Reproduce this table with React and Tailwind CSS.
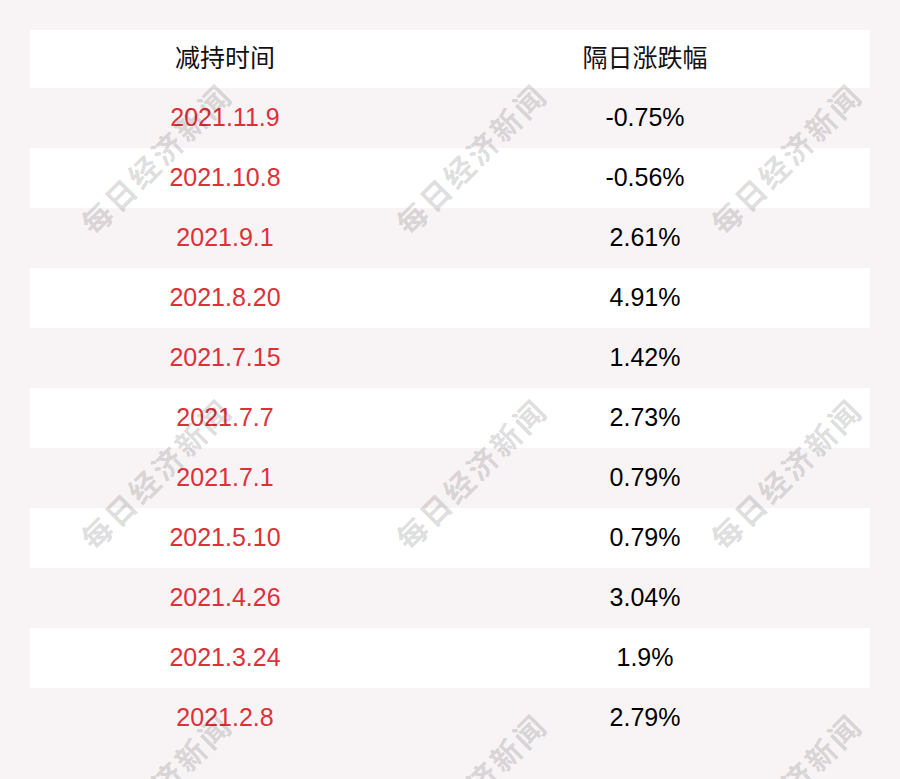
const rows = [
  ["2021.11.9", "-0.75%"],
  ["2021.10.8", "-0.56%"],
  ["2021.9.1", "2.61%"],
  ["2021.8.20", "4.91%"],
  ["2021.7.15", "1.42%"],
  ["2021.7.7", "2.73%"],
  ["2021.7.1", "0.79%"],
  ["2021.5.10", "0.79%"],
  ["2021.4.26", "3.04%"],
  ["2021.3.24", "1.9%"],
  ["2021.2.8", "2.79%"],
];

// watermark centres, 315px apart
const marks = [];
for (const y of [158, 473, 788]) {
  for (const x of [156, 471, 786]) marks.push([x, y]);
}

function App() {
  return (
    <div
      className="relative h-[779px] w-[900px] overflow-hidden bg-[#f8f4f5] px-[30px] pt-[30px] text-[25px]"
      style={{ fontFamily: '"Liberation Sans", Arial, "Noto Sans CJK SC", sans-serif' }}
    >
      <div className="grid h-[58px] grid-cols-2 items-center bg-white text-[#111]">
        <div className="pr-[30px] text-center">减持时间</div>
        <div className="pr-[30px] text-center">隔日涨跌幅</div>
      </div>
      {rows.map(([date, pct], i) => (
        <div
          key={date}
          className={`grid h-[60px] grid-cols-2 items-center ${i % 2 === 1 ? "bg-white" : ""}`}
        >
          <div className="pr-[30px] text-center text-[#dc313a]">{date}</div>
          <div className="pr-[30px] text-center text-black">{pct}</div>
        </div>
      ))}

      {marks.map(([x, y]) => (
        <div
          key={`${x}-${y}`}
          className="pointer-events-none absolute flex h-0 w-0 items-center justify-center"
          style={{ left: x, top: y }}
        >
          <span
            className="-rotate-45 whitespace-nowrap text-[30px] font-bold tracking-[3px] text-black/15"
            style={{ fontFamily: '"Noto Sans CJK SC", sans-serif' }}
          >
            每日经济新闻
          </span>
        </div>
      ))}
    </div>
  );
}

export default App;
